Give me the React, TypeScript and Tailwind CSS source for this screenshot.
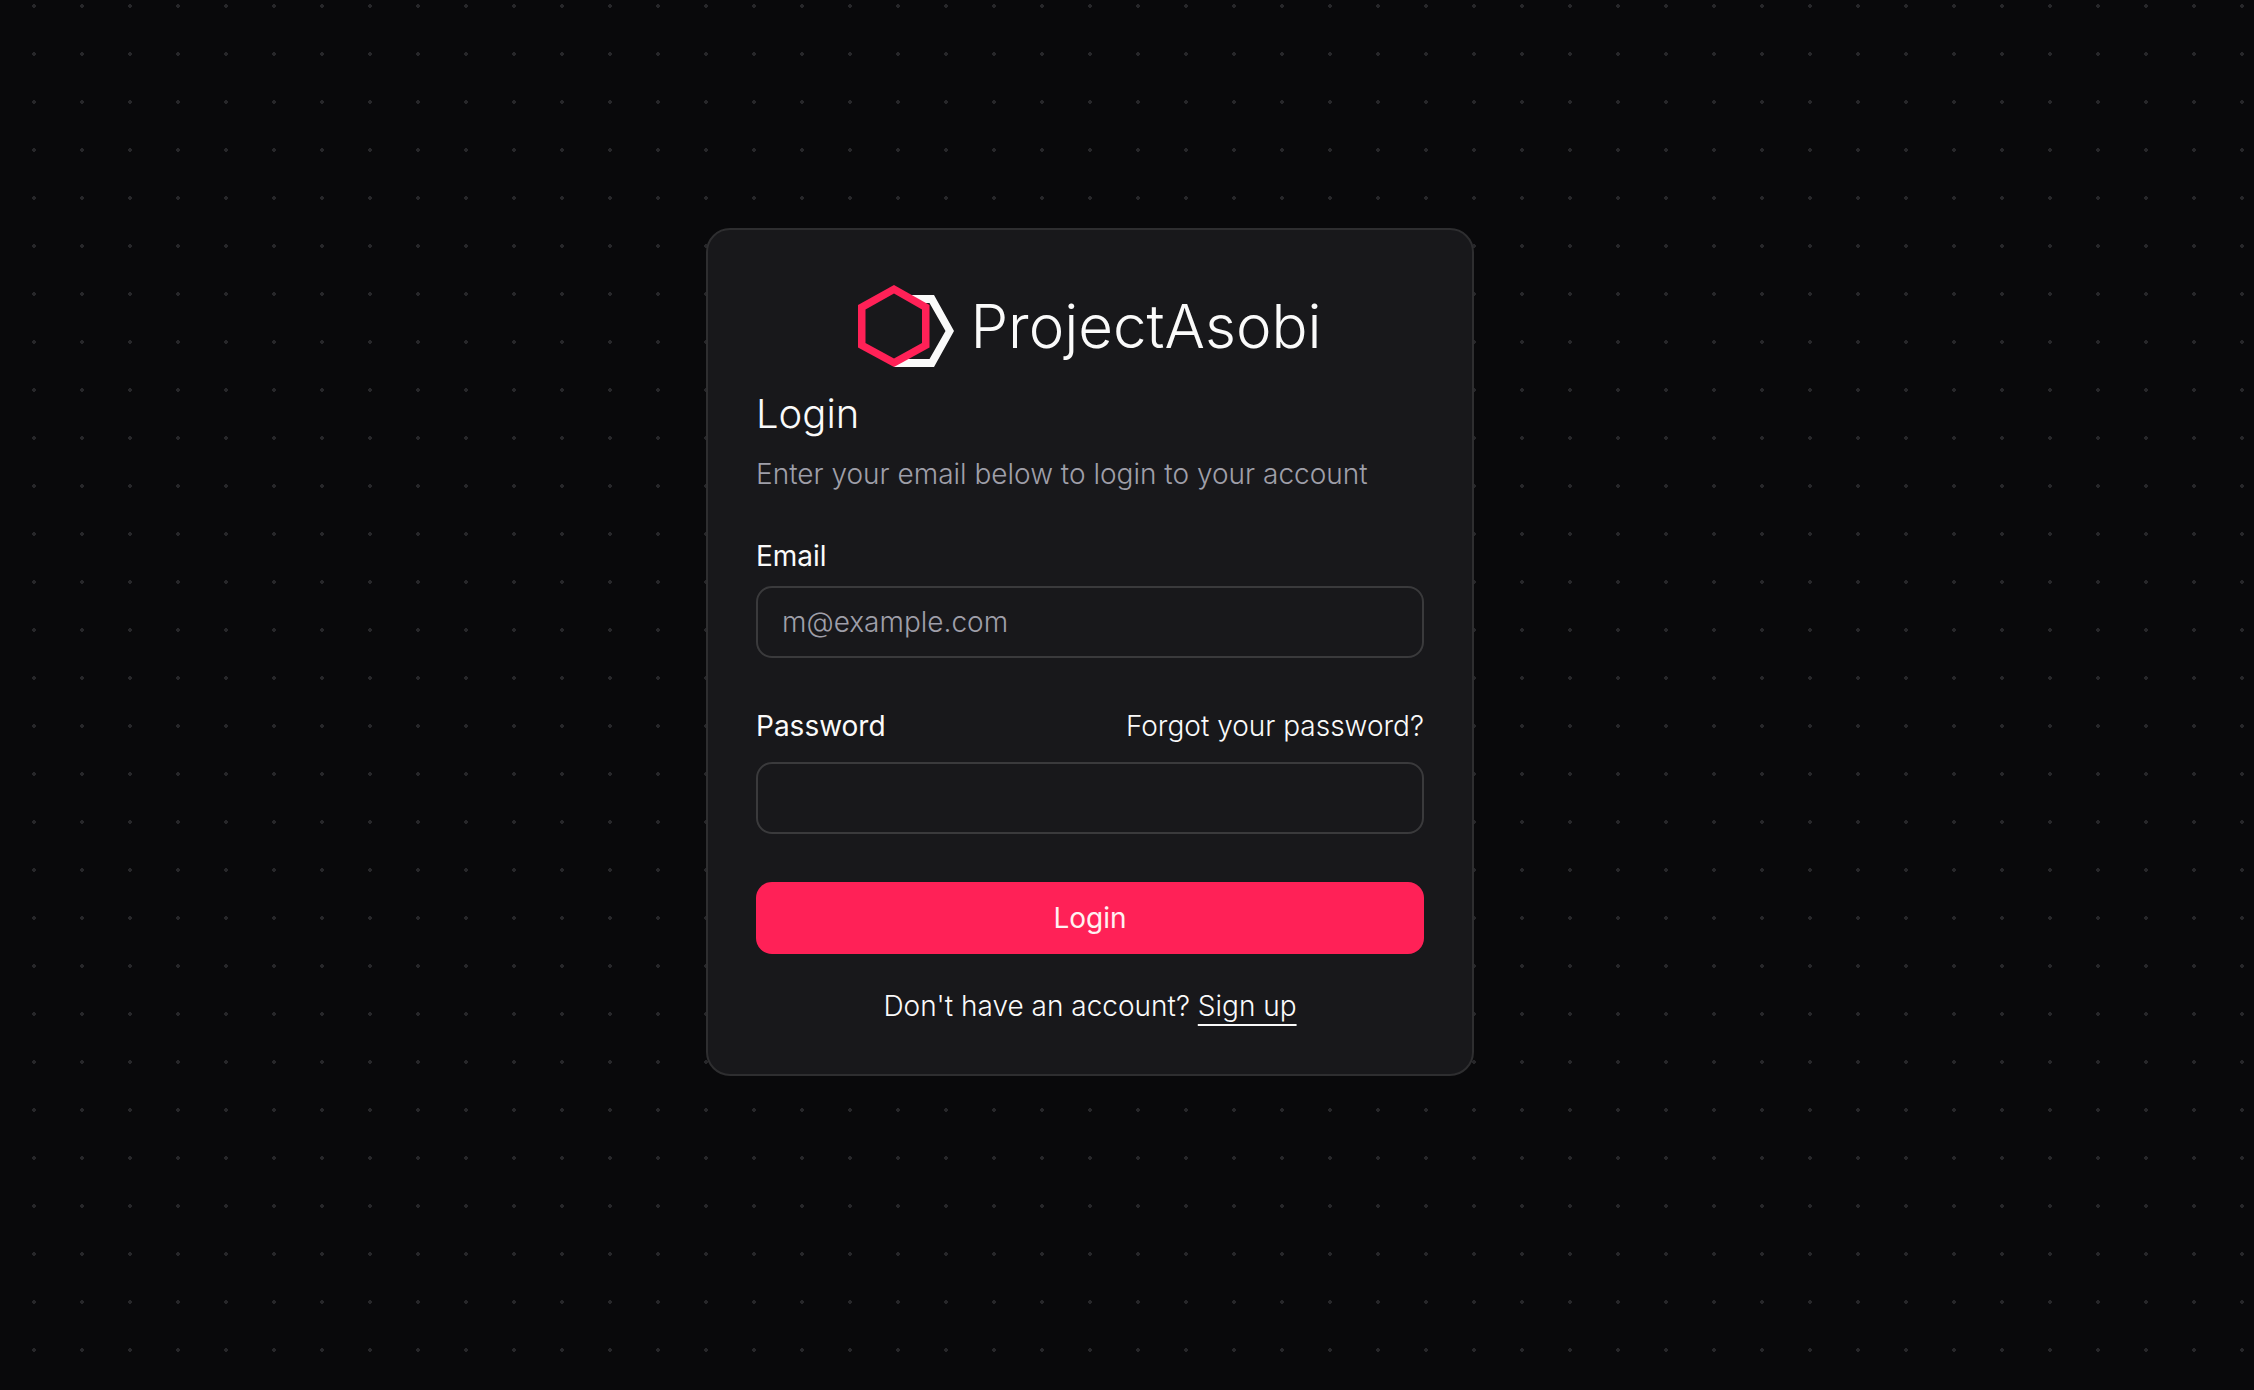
import type { FormEvent } from "react";

const Logo = () => {
  return (
    <div className="flex h-24 items-center justify-center gap-4">
      <svg width="96" height="82" viewBox="0 0 96 82" aria-hidden="true">
        <path
          d="M36 10H76L96 46L76 82H36V74H71.5L87.5 46L71.5 18H36Z"
          fill="#fafafa"
        />
        <path d="M36 0L71.5 20V62.5L36 82L0 62.5V20Z" fill="#ff2157" />
        <path d="M36 8.5L64 24.5V58L36 73.5L7.5 58V24.5Z" fill="#18181b" />
      </svg>
      <span className="text-[60px] font-light leading-none text-neutral-50">
        ProjectAsobi
      </span>
    </div>
  );
};

const LoginForm = () => {
  const handleSubmit = (e: FormEvent) => {
    e.preventDefault();
  };

  return (
    <div className="w-full max-w-3xl rounded-3xl border-2 border-[#2e2e30] bg-[#18181b] p-12 text-neutral-50">
      {/* Header */}
      <div className="flex flex-col gap-3 pb-12">
        <Logo />
        <h1 className="text-[40px] font-light leading-[56px]">Login</h1>
        <p className="text-[28px] font-light leading-10 text-[#9f9fa9]">
          Enter your email below to login to your account
        </p>
      </div>

      <form onSubmit={handleSubmit} className="flex flex-col gap-12">
        <div className="flex flex-col gap-4">
          <label htmlFor="email" className="text-[28px] leading-none">
            Email
          </label>
          <input
            id="email"
            type="email"
            placeholder="m@example.com"
            className="h-18 w-full rounded-2xl border-2 border-[#3a3a3c] bg-transparent px-6 text-[28px] font-light outline-none placeholder:text-[#9f9fa9]"
          />
        </div>

        <div className="flex flex-col gap-4">
          <div className="flex items-center justify-between">
            <label htmlFor="password" className="text-[28px] leading-none">
              Password
            </label>
            <a href="#" className="text-[28px] font-light leading-10 underline-offset-4 hover:underline">
              Forgot your password?
            </a>
          </div>
          <input
            id="password"
            type="password"
            className="h-18 w-full rounded-2xl border-2 border-[#3a3a3c] bg-transparent px-6 text-[28px] outline-none"
          />
        </div>

        <button
          type="submit"
          className="h-18 w-full cursor-pointer rounded-2xl bg-[#ff2157] text-[28px] text-rose-50"
        >
          Login
        </button>
      </form>

      <p className="mt-8 text-center text-[28px] font-light leading-10">
        Don't have an account?{" "}
        <a href="#" className="underline decoration-2 underline-offset-8">
          Sign up
        </a>
      </p>
    </div>
  );
};

export default function App() {
  return (
    <main className="flex min-h-screen items-center justify-center bg-[#09090b] bg-[radial-gradient(circle,#27272a_2px,transparent_2px)] bg-[size:48px_48px] bg-[position:10px_-18px] pr-[74px] pb-[86px] font-[Inter,sans-serif]">
      <LoginForm />
    </main>
  );
}
